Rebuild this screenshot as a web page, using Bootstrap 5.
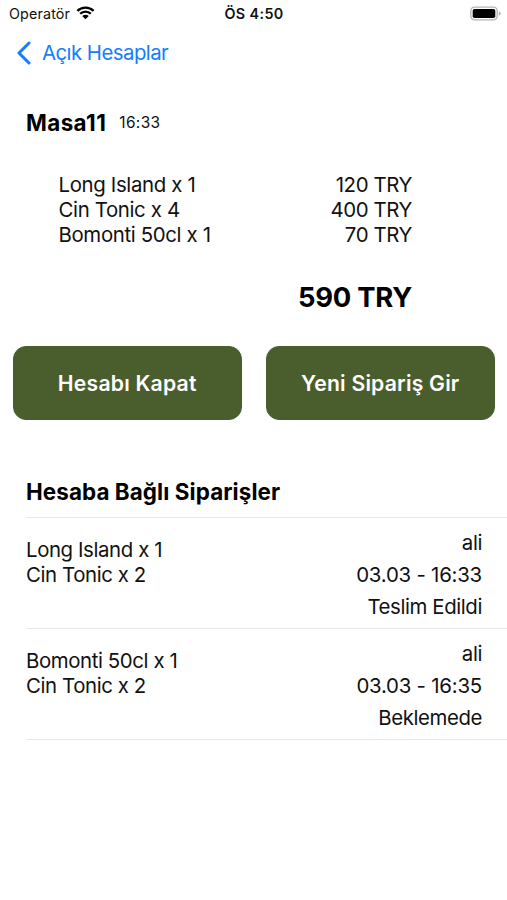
<!DOCTYPE html>
<html lang="tr">
<head>
<meta charset="utf-8">
<meta name="viewport" content="width=device-width, initial-scale=1">
<title>Masa11</title>
<link href="https://cdn.jsdelivr.net/npm/bootstrap@5.3.0/dist/css/bootstrap.min.css" rel="stylesheet">
<style>
body{font-family:Inter,"Liberation Sans",sans-serif;font-size:20.4px;line-height:24.75px;letter-spacing:-.4px;color:#111;background:#fff;overflow:hidden}
.status{height:28px;font-size:14.3px;line-height:28px;letter-spacing:.15px;padding:0 4px 0 9px}
.status .clock{font-weight:600;letter-spacing:.4px}
.status .wifi{margin:0 0 2px 6px}
.topnav{height:49px;padding:1px 0 0 17px;color:#147efb}
.topnav a{color:inherit;gap:9px}
.back-label{letter-spacing:-.55px}
.titlebar{height:91px;padding:1px 0 0 26px;gap:13px}
.title{font-size:22.4px;font-weight:700;letter-spacing:.4px;color:#000}
.opened{font-size:15.4px;letter-spacing:.4px}
.bill{margin:5px 95px 0 58.5px}
.bill-name{letter-spacing:-.35px}
.price{letter-spacing:-.38px}
.date{letter-spacing:-.22px}
.total{font-size:27.4px;font-weight:700;letter-spacing:-.25px;line-height:34px;margin:33px 95px 0 0;color:#000}
.actions{margin:32.2px 12.5px 0 13px;gap:24.5px}
.btn-olive{--bs-btn-color:#fff;--bs-btn-bg:#4a5d2c;--bs-btn-border-color:#4a5d2c;--bs-btn-hover-color:#fff;--bs-btn-hover-bg:#40522a;height:73.3px;padding-top:8px;border-radius:13px;font-size:21.2px;font-weight:600;letter-spacing:.2px}
.section-title{font-size:22.4px;font-weight:700;letter-spacing:.09px;color:#000;margin:59.5px 0 12.5px 26px;line-height:25px}
.orders{margin-left:26px;border-top:1px solid #e9e9e9}
.order{height:111px;padding:9px 25px 0 0;border-bottom:1px solid #e9e9e9}
.order-items{padding-top:11.4px}
.order-meta{line-height:31.9px}
</style>
</head>
<body>
<header>
  <div class="status row g-0">
    <div class="col d-flex align-items-center"><span class="operator">Operatör</span>
      <svg class="wifi" width="19" height="14" viewBox="0 0 20 15" fill="none" stroke="#000"><path d="M1.3 5.3a12.4 12.4 0 0 1 17.4 0M4.3 8.3a8.1 8.1 0 0 1 11.4 0" stroke-width="2.5"/><path d="M6.5 10.7a5 5 0 0 1 7 0L10 14.2z" fill="#000" stroke="none"/></svg>
    </div>
    <div class="col-auto clock me-1">ÖS 4:50</div>
    <div class="col d-flex align-items-center justify-content-end">
      <svg width="33" height="16" viewBox="0 0 33 16"><rect x=".8" y="1.1" width="26.4" height="12.8" rx="3.8" fill="#fff" stroke="#b5b5b5" stroke-width="1.4"/><rect x="2.7" y="3" width="22.6" height="9" rx="1.8"/><path d="M28.8 5.3q2 1 2 2.2t-2 2.2z" fill="#b5b5b5"/></svg>
    </div>
  </div>
  <nav class="topnav d-flex align-items-center">
    <a href="#" class="d-flex align-items-center text-decoration-none">
      <svg width="16" height="24" viewBox="0 0 16 24" fill="none" stroke="currentColor" stroke-width="3" stroke-linecap="round" stroke-linejoin="round"><path d="M12 2 2 12l10 10"/></svg>
      <span class="back-label">Açık Hesaplar</span>
    </a>
  </nav>
</header>
<main>
  <div class="titlebar d-flex align-items-center"><span class="title">Masa11</span><span class="opened">16:33</span></div>
  <section class="bill">
    <div class="d-flex justify-content-between"><span class="bill-name">Long Island x 1</span><span class="price">120 TRY</span></div>
    <div class="d-flex justify-content-between"><span class="bill-name">Cin Tonic x 4</span><span class="price">400 TRY</span></div>
    <div class="d-flex justify-content-between"><span class="bill-name">Bomonti 50cl x 1</span><span class="price">70 TRY</span></div>
  </section>
  <div class="total text-end">590 TRY</div>
  <div class="actions d-flex">
    <button class="btn btn-olive flex-fill w-50" type="button">Hesabı Kapat</button>
    <button class="btn btn-olive flex-fill w-50" type="button">Yeni Sipariş Gir</button>
  </div>
  <h2 class="section-title">Hesaba Bağlı Siparişler</h2>
  <section class="orders">
    <div class="order d-flex justify-content-between">
      <div class="order-items"><div>Long Island x 1</div><div>Cin Tonic x 2</div></div>
      <div class="order-meta text-end"><div>ali</div><div class="date">03.03 - 16:33</div><div>Teslim Edildi</div></div>
    </div>
    <div class="order d-flex justify-content-between">
      <div class="order-items"><div>Bomonti 50cl x 1</div><div>Cin Tonic x 2</div></div>
      <div class="order-meta text-end"><div>ali</div><div class="date">03.03 - 16:35</div><div>Beklemede</div></div>
    </div>
  </section>
</main>
<script src="https://cdn.jsdelivr.net/npm/bootstrap@5.3.0/dist/js/bootstrap.bundle.min.js"></script>
</body>
</html>
